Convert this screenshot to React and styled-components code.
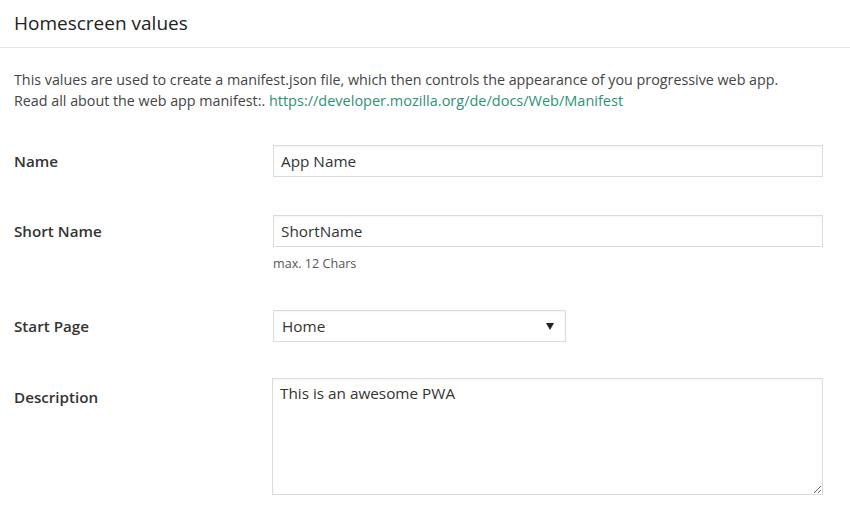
import React from "react";
import styled, { createGlobalStyle } from "styled-components";

const Global = createGlobalStyle`
  html, body { margin: 0; padding: 0; background: #fff; }
  body { font-family: "Open Sans", "Noto Sans", sans-serif; color: #333; }
  * { box-sizing: border-box; }
`;

const Page = styled.div`
  width: 850px;
  height: 507px;
  overflow: hidden;
  background: #fff;
`;

const Header = styled.div`
  height: 48px;
  border-bottom: 1px solid #e6e6e6;
  display: flex;
  align-items: center;
  padding: 0 14px 2px;
`;

const Title = styled.h2`
  margin: 0;
  font-size: 19px;
  font-weight: 400;
  color: #222;
`;

const Body = styled.div`
  padding: 21px 14px 0;
`;

const Intro = styled.p`
  margin: 0 0 34px;
  font-size: 14.3px;
  line-height: 21px;
  color: #444;
  white-space: nowrap;
`;

const Link = styled.a`
  color: #2f9274;
  text-decoration: none;
  font-size: 14.5px;
`;

const Row = styled.div`
  display: grid;
  grid-template-columns: 259px 550px;
  margin-bottom: ${(p) => p.$gap || "38px"};
`;

const Label = styled.label`
  font-size: 15.2px;
  font-weight: 600;
  color: #333;
  line-height: 32px;
  padding-top: ${(p) => (p.$top ? "3px" : "0")};
`;

const Field = styled.div`
  display: flex;
  flex-direction: column;
  align-items: flex-start;
`;

const controlBase = `
  font-family: "Open Sans", "Noto Sans", sans-serif;
  font-size: 15.3px;
  color: #333;
  background: #fff;
  border: 1px solid #dcdcdc;
  box-shadow: inset 0 1px 2px rgba(0,0,0,0.05);
  border-radius: 0;
  outline: none;
`;

const Input = styled.input`
  ${controlBase}
  width: 550px;
  height: 32px;
  padding: 0 7px;
`;

const Help = styled.span`
  margin-top: 8px;
  font-size: 12.6px;
  line-height: 17px;
  color: #555;
`;

const SelectBox = styled.div`
  ${controlBase}
  position: relative;
  width: 293px;
  height: 32px;
  padding: 0 8px;
  display: flex;
  align-items: center;
  justify-content: space-between;
`;

const Arrow = styled.span`
  width: 0;
  height: 0;
  border-left: 4px solid transparent;
  border-right: 4px solid transparent;
  border-top: 7px solid #222;
  margin-right: 3px;
`;

const TextArea = styled.textarea`
  ${controlBase}
  width: 551px;
  height: 117px;
  padding: 4px 7px;
  resize: vertical;
  line-height: 20px;
  margin-left: -1px;
`;

export default function App() {
  return (
    <Page>
      <Global />
      <Header>
        <Title>Homescreen values</Title>
      </Header>
      <Body>
        <Intro>
          This values are used to create a manifest.json file, which then controls the appearance of you progressive web app.
          <br />
          Read all about the web app manifest:.{" "}
          <Link href="#">https://developer.mozilla.org/de/docs/Web/Manifest</Link>
        </Intro>
        <Row>
          <Label>Name</Label>
          <Field>
            <Input defaultValue="App Name" />
          </Field>
        </Row>
        <Row>
          <Label>Short Name</Label>
          <Field>
            <Input defaultValue="ShortName" />
            <Help>max. 12 Chars</Help>
          </Field>
        </Row>
        <Row $gap="36px">
          <Label>Start Page</Label>
          <Field>
            <SelectBox>
              <span>Home</span>
              <Arrow />
            </SelectBox>
          </Field>
        </Row>
        <Row>
          <Label $top>Description</Label>
          <Field>
            <TextArea defaultValue="This is an awesome PWA" />
          </Field>
        </Row>
      </Body>
    </Page>
  );
}
